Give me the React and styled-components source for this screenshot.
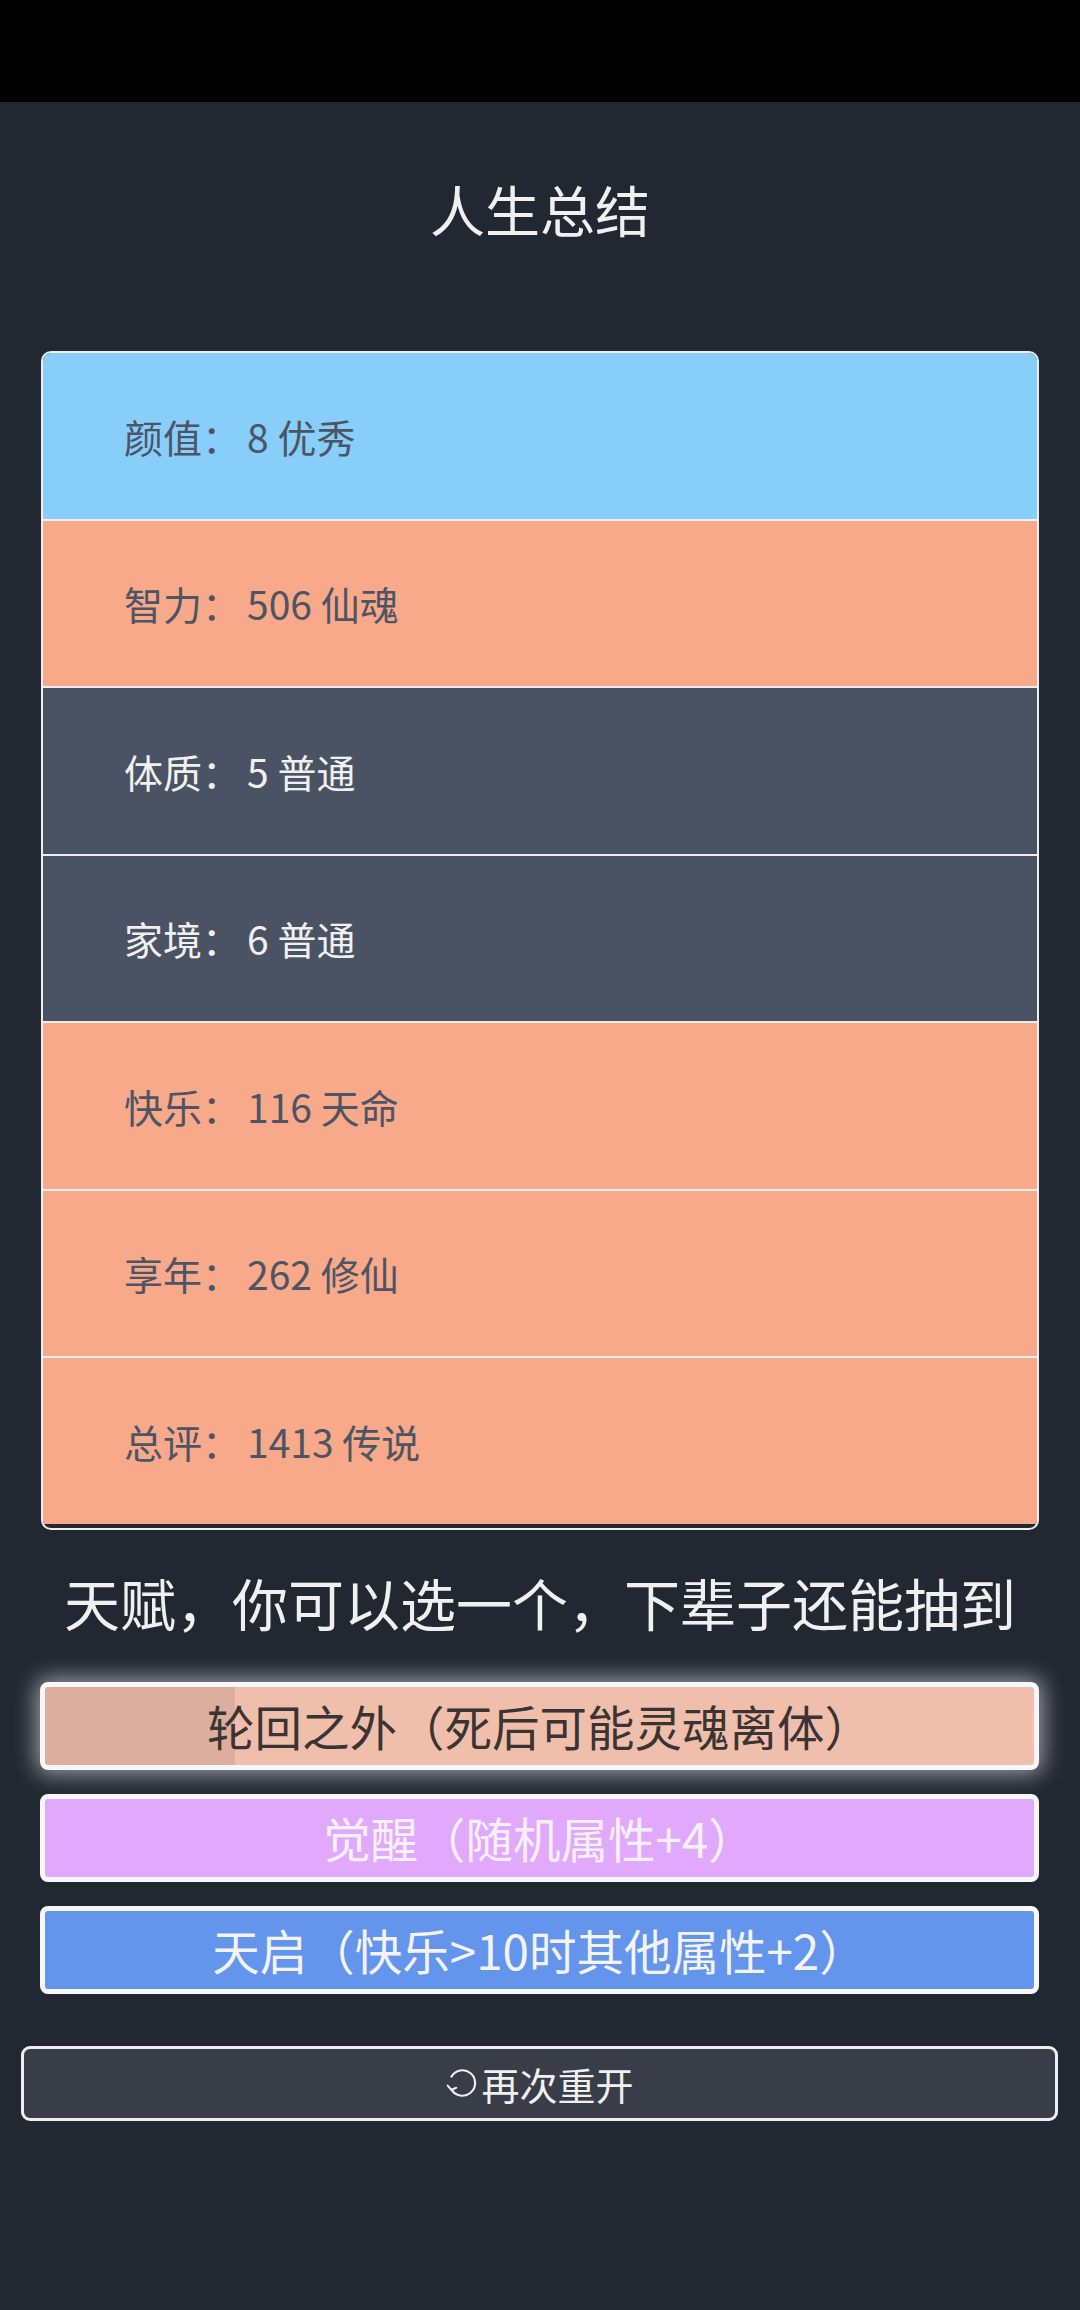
import React from 'react'
import styled, { createGlobalStyle } from 'styled-components'

const GlobalStyle = createGlobalStyle`
    * { box-sizing: border-box; }
    html, body {
        margin: 0;
        padding: 0;
        background: #222831;
    }
    body {
        font-family: "Noto Sans CJK SC", "Noto Sans", sans-serif;
    }
`;

const stats = [
    { label: '颜值', value: '8 优秀', tone: 'blue' },
    { label: '智力', value: '506 仙魂', tone: 'orange' },
    { label: '体质', value: '5 普通', tone: 'gray' },
    { label: '家境', value: '6 普通', tone: 'gray' },
    { label: '快乐', value: '116 天命', tone: 'orange' },
    { label: '享年', value: '262 修仙', tone: 'orange' },
    { label: '总评', value: '1413 传说', tone: 'orange' },
]

const talents = [
    { text: '轮回之外（死后可能灵魂离体）', tone: 'peach', selected: true },
    { text: '觉醒（随机属性+4）', tone: 'purple' },
    { text: '天启（快乐>10时其他属性+2）', tone: 'cornflower' },
]

const rowColors = {
    blue: { bg: '#87cefa', fg: '#4d5565' },
    orange: { bg: '#f7a98a', fg: '#4d5565' },
    gray: { bg: '#4a5363', fg: '#f0f0f0' },
}

const talentColors = {
    peach: { bg: 'linear-gradient(to right, #dbae9e 190px, #f0bfac 190px)', fg: '#3a3433' },
    purple: { bg: '#e0a9fd', fg: '#f6f0fa' },
    cornflower: { bg: '#6495ed', fg: '#f3f3f6' },
}

const RestartIcon = () => (
    <svg width="34" height="36" viewBox="0 0 32 34" fill="none" stroke="#eeeeee" strokeWidth="2" strokeLinecap="round">
        <path d="M6 11 A12 12 0 1 1 6 23" />
        <path d="M2.5 19.5 L6 23.5 L10.5 21.5" />
    </svg>
)

const App = () => {
    return (
        <Page>
            <GlobalStyle />
            <StatusBar />
            <Title>人生总结</Title>
            <SummaryCard>
                {stats.map((s) => (
                    <StatRow key={s.label} tone={s.tone}>
                        {s.label}：<StatValue>{s.value}</StatValue>
                    </StatRow>
                ))}
            </SummaryCard>
            <Heading>天赋，你可以选一个，下辈子还能抽到</Heading>
            <TalentList>
                {talents.map((t) => (
                    <TalentButton key={t.text} tone={t.tone} $selected={t.selected}>
                        {t.text}
                    </TalentButton>
                ))}
            </TalentList>
            <RestartButton>
                <RestartIcon />
                再次重开
            </RestartButton>
        </Page>
    )
}

export default App

const Page = styled.div`
    min-height: 2310px;
    background: #222831;
    display: flex;
    flex-direction: column;
`;

const StatusBar = styled.div`
    height: 102px;
    background: #000;
`;

const Title = styled.h1`
    margin: 66px 0 0;
    font-size: 55px;
    font-weight: 400;
    line-height: 81px;
    text-align: center;
    color: #f0f0f0;
`;

const SummaryCard = styled.div`
    margin: 102px 41px 0;
    border: 2px solid #eeeeee;
    border-radius: 10px;
    overflow: hidden;
    background: #222831;
    padding-bottom: 4px;
    display: flex;
    flex-direction: column;
`;

const StatRow = styled.div`
    height: 165.5px;
    display: flex;
    align-items: center;
    padding-left: 81px;
    font-size: 39px;
    background: ${(p) => rowColors[p.tone].bg};
    color: ${(p) => rowColors[p.tone].fg};
    & + & {
        border-top: 2px solid #eeeeee;
        height: 167.5px;
    }
`;

const StatValue = styled.span`
    margin-left: 6px;
`;

const Heading = styled.h2`
    margin: 31px 0 0;
    font-size: 56px;
    font-weight: 400;
    line-height: 82px;
    text-align: center;
    color: #f0f0f0;
`;

const TalentList = styled.div`
    margin: 39px 41px 0 40px;
    display: flex;
    flex-direction: column;
    gap: 24px;
`;

const TalentButton = styled.div`
    height: 88px;
    border: 5px solid #f7f7f9;
    border-radius: 8px;
    display: flex;
    align-items: center;
    justify-content: center;
    font-size: 47.5px;
    background: ${(p) => talentColors[p.tone].bg};
    color: ${(p) => talentColors[p.tone].fg};
    box-shadow: ${(p) => (p.$selected ? '0 0 22px 4px rgba(255, 255, 255, 0.55)' : 'none')};
`;

const RestartButton = styled.button`
    margin: 52px 22px 0 21px;
    height: 75px;
    border: 3px solid #eeeeee;
    border-radius: 9px;
    background: #393d48;
    color: #f0f0f0;
    font-family: "Noto Sans CJK SC", "Noto Sans", sans-serif;
    font-size: 38px;
    display: flex;
    align-items: center;
    justify-content: center;
    gap: 2px;
    padding: 0;
`;
